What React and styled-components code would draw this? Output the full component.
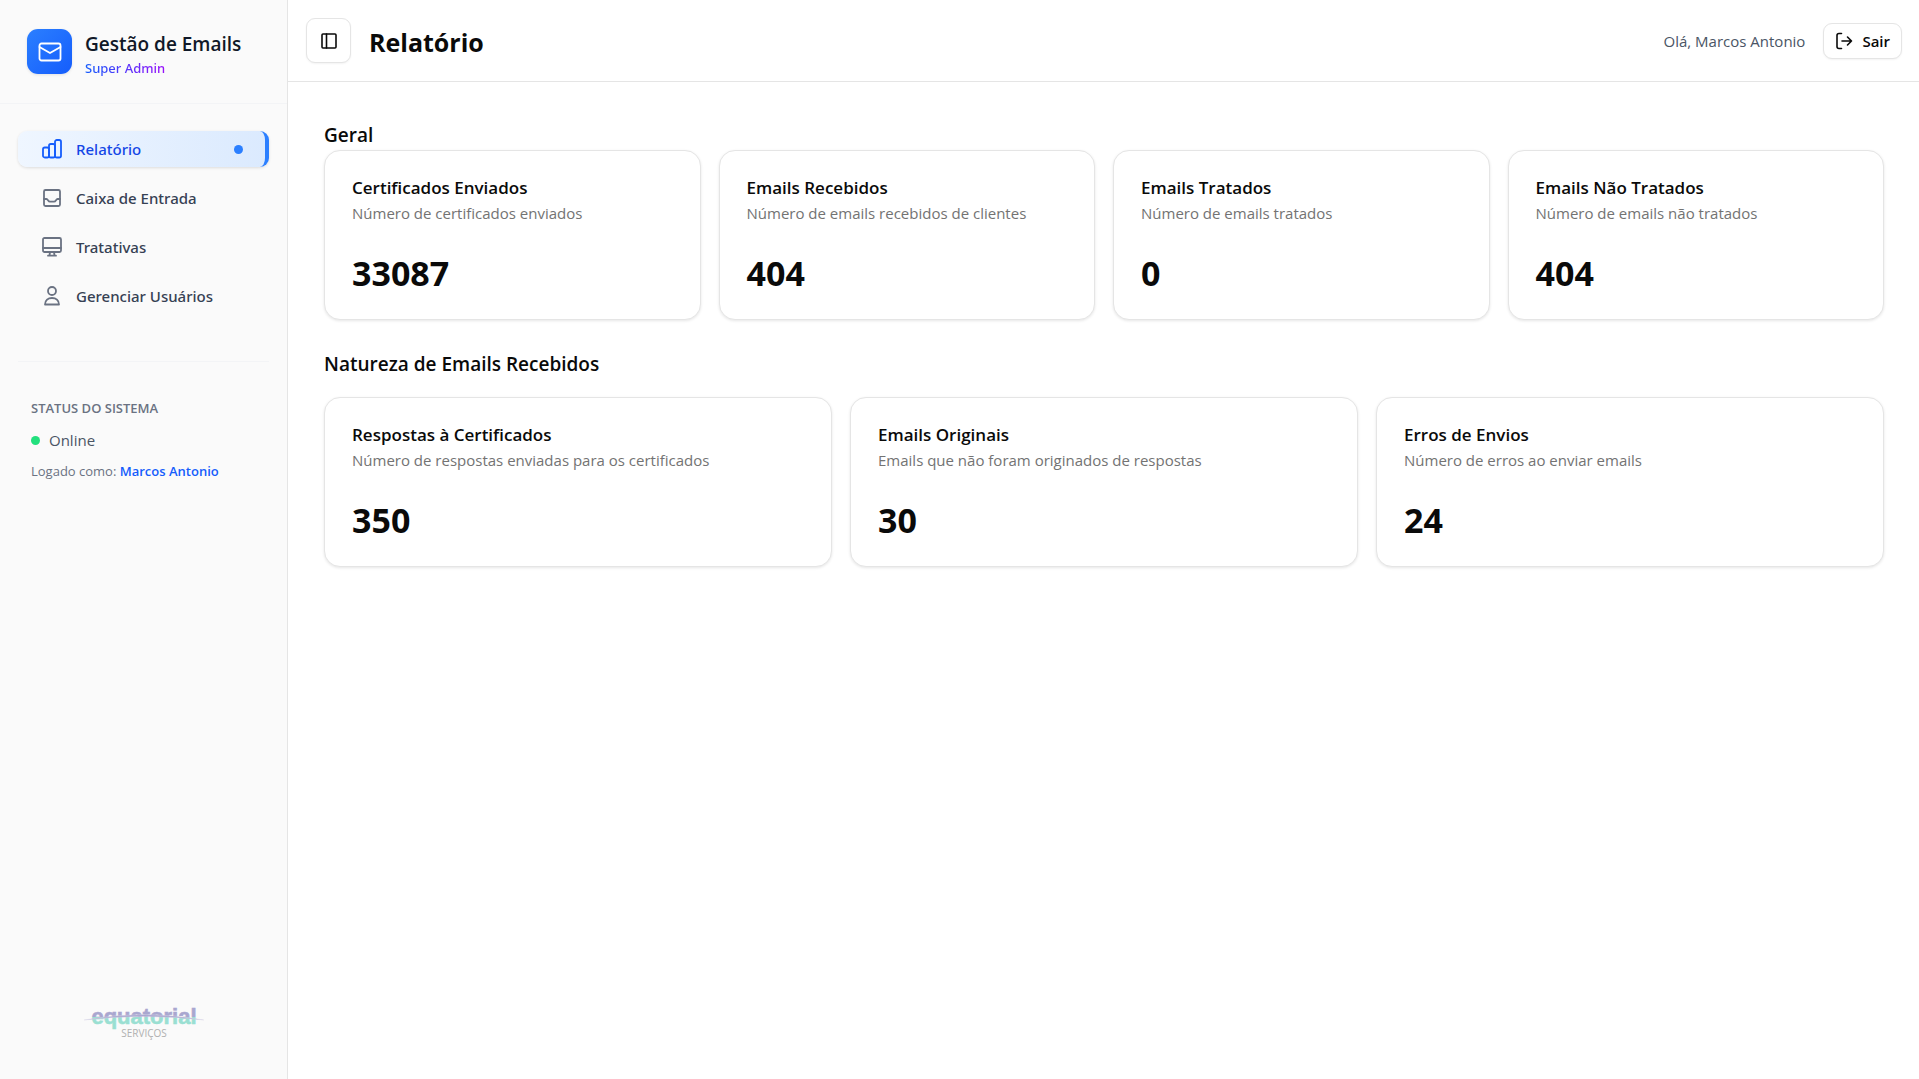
import styled, { createGlobalStyle } from "styled-components";

const menu = [
  { name: "Relatório", Icon: ChartIcon, active: true },
  { name: "Caixa de Entrada", Icon: InboxIcon },
  { name: "Tratativas", Icon: MonitorIcon },
  { name: "Gerenciar Usuários", Icon: UserIcon },
];

const general = [
  {
    title: "Certificados Enviados",
    description: "Número de certificados enviados",
    value: 33087,
  },
  {
    title: "Emails Recebidos",
    description: "Número de emails recebidos de clientes",
    value: 404,
  },
  {
    title: "Emails Tratados",
    description: "Número de emails tratados",
    value: 0,
  },
  {
    title: "Emails Não Tratados",
    description: "Número de emails não tratados",
    value: 404,
  },
];

const nature = [
  {
    title: "Respostas à Certificados",
    description: "Número de respostas enviadas para os certificados",
    value: 350,
  },
  {
    title: "Emails Originais",
    description: "Emails que não foram originados de respostas",
    value: 30,
  },
  {
    title: "Erros de Envios",
    description: "Número de erros ao enviar emails",
    value: 24,
  },
];

function App() {
  return (
    <Wrapper>
      <GlobalStyle />
      <Sidebar>
        <Brand>
          <BrandIcon>
            <MailIcon />
          </BrandIcon>
          <div>
            <BrandName>Gestão de Emails</BrandName>
            <Role>Super Admin</Role>
          </div>
        </Brand>
        <Nav>
          {menu.map(({ name, Icon, active }) => (
            <NavLink key={name} href="#" $active={active}>
              <Icon />
              <span>{name}</span>
              {active && <ActiveDot />}
            </NavLink>
          ))}
        </Nav>
        <Status>
          <StatusTitle>STATUS DO SISTEMA</StatusTitle>
          <Online>
            <OnlineDot />
            Online
          </Online>
          <Logged>
            Logado como: <strong>Marcos Antonio</strong>
          </Logged>
        </Status>
        <SidebarFooter>
          <EquatorialLogo />
        </SidebarFooter>
      </Sidebar>

      <Main>
        <Header>
          <IconButton type="button" aria-label="Alternar menu">
            <PanelIcon />
          </IconButton>
          <PageTitle>Relatório</PageTitle>
          <Greeting>Olá, Marcos Antonio</Greeting>
          <LogoutButton type="button">
            <LogoutIcon />
            Sair
          </LogoutButton>
        </Header>
        <Content>
          <section>
            <SectionTitle>Geral</SectionTitle>
            <Cards $columns={4}>
              {general.map((item) => (
                <StatCard key={item.title} {...item} />
              ))}
            </Cards>
          </section>
          <SpacedSection>
            <SectionTitle>Natureza de Emails Recebidos</SectionTitle>
            <Cards $columns={3}>
              {nature.map((item) => (
                <StatCard key={item.title} {...item} />
              ))}
            </Cards>
          </SpacedSection>
        </Content>
      </Main>
    </Wrapper>
  );
}

export default App;

function StatCard({ title, description, value }) {
  return (
    <Card>
      <CardTitle>{title}</CardTitle>
      <CardDescription>{description}</CardDescription>
      <CardValue>{value}</CardValue>
    </Card>
  );
}

function ChartIcon() {
  return (
    <Stroke viewBox="0 0 20 20" $size={20}>
      <rect x="1" y="8.5" width="6" height="10" rx="1.8" />
      <rect x="7" y="5" width="6" height="13.5" rx="1.8" />
      <rect x="13" y="1" width="6" height="17.5" rx="1.8" />
    </Stroke>
  );
}

function InboxIcon() {
  return (
    <Stroke viewBox="0 0 20 20" $size={20}>
      <rect x="2" y="2" width="16" height="16" rx="1.5" />
      <path d="M2 11h2.500C6 11 6 13.700 8 13.700h4c2 0 2-2.700 3.500-2.700H18" />
    </Stroke>
  );
}

function MonitorIcon() {
  return (
    <Stroke viewBox="0 0 20 20" $size={20}>
      <rect x="1" y="1" width="18" height="14" rx="1.5" />
      <path d="M1 11h18M8 15l-.5 3.500M12 15l.5 3.500M6 18.700h8" />
    </Stroke>
  );
}

function UserIcon() {
  return (
    <Stroke viewBox="0 0 20 20" $size={20}>
      <circle cx="10" cy="5" r="4" />
      <path d="M3 18.500C3 14.500 6 12 10 12s7 2.500 7 6.500z" />
    </Stroke>
  );
}

function MailIcon() {
  return (
    <Stroke viewBox="0 0 24 24" $size={24}>
      <rect x="1.5" y="3.5" width="21" height="17" rx="2" />
      <path d="M1.500 7L12 13l10.500-6" />
    </Stroke>
  );
}

function PanelIcon() {
  return (
    <Stroke viewBox="0 0 18 18" $size={18} $weight={1.6}>
      <rect x="2" y="2" width="14" height="14" rx="1" />
      <path d="M6.500 2v14" />
    </Stroke>
  );
}

function LogoutIcon() {
  return (
    <Stroke viewBox="0 0 18 18" $size={18} $weight={1.6}>
      <path d="M6.500 1.500H4Q2 1.500 2 3.500v11Q2 16.500 4 16.500H6.500M7 9H16.500M12.500 5l4 4-4 4" />
    </Stroke>
  );
}

function EquatorialLogo() {
  return (
    <LogoSvg viewBox="0 0 122 40" role="img" aria-label="Equatorial Serviços">
      <defs>
        <linearGradient
          id="logoFill"
          gradientUnits="userSpaceOnUse"
          x1="0"
          y1="0"
          x2="0"
          y2="30"
        >
          <stop offset="0.52" stopColor="#a9a7cf" />
          <stop offset="0.52" stopColor="#9adfd2" />
        </linearGradient>
      </defs>
      <LogoName x="61" y="23">
        equatorial
      </LogoName>
      <path
        d="M1 19Q61 8 121 19Q61 12 1 19z"
        fill="#a9a7cf"
        stroke="#dddcec"
        strokeWidth="0.4"
      />
      <LogoCaption x="61" y="36">
        SERVIÇOS
      </LogoCaption>
    </LogoSvg>
  );
}

const GlobalStyle = createGlobalStyle`
  * {
    box-sizing: border-box;
  }

  body {
    margin: 0;
    background: #ffffff;
    color: #0a0a0a;
    font-family: "Open Sans", "Noto Sans", sans-serif;
    font-size: 15px;
  }

  h1, h2, h3, p {
    margin: 0;
  }

  button {
    font: inherit;
    color: inherit;
    cursor: pointer;
  }
`;

const Wrapper = styled.div`
  display: flex;
  min-height: 100vh;
`;

const Sidebar = styled.aside`
  display: flex;
  flex-direction: column;
  flex-shrink: 0;
  width: 288px;
  background: #fafafa;
  border-right: 1px solid #e5e5e5;
`;

const Brand = styled.div`
  display: flex;
  align-items: center;
  gap: 13px;
  height: 104px;
  padding: 0 27px;
  border-bottom: 1px solid #f3f4f6;
`;

const BrandIcon = styled.div`
  display: grid;
  place-items: center;
  width: 45px;
  height: 45px;
  border-radius: 11px;
  color: #ffffff;
  background: linear-gradient(135deg, #2b7fff, #155dfc);
  box-shadow: 0 1px 3px rgba(0, 0, 0, 0.1);
`;

const BrandName = styled.h2`
  padding-top: 4px;
  font-size: 19px;
  font-weight: 600;
  line-height: 28px;
  color: #101828;
`;

const Role = styled.p`
  width: fit-content;
  font-family: "Noto Sans", "Open Sans", sans-serif;
  font-size: 13px;
  font-weight: 500;
  line-height: 20px;
  color: transparent;
  background: linear-gradient(90deg, #155dfc, #9810fa);
  background-clip: text;
`;

const Nav = styled.nav`
  display: flex;
  flex-direction: column;
  gap: 13px;
  margin: 0 18px;
  padding: 27px 0 47px;
  border-bottom: 1px solid #f3f4f6;
`;

const NavLink = styled.a`
  display: flex;
  align-items: center;
  gap: 14px;
  height: 36px;
  padding: 0 22px 0 24px;
  border-radius: 9px;
  border-right: 4px solid ${({ $active }) => ($active ? "#2b7fff" : "transparent")};
  background: ${({ $active }) =>
    $active ? "linear-gradient(90deg, #eff6ff, #dbeafe)" : "none"};
  box-shadow: ${({ $active }) =>
    $active ? "0 1px 3px rgba(0, 0, 0, 0.12)" : "none"};
  color: ${({ $active }) => ($active ? "#1447e6" : "#364153")};
  font-family: "Noto Sans", "Open Sans", sans-serif;
  font-weight: 500;
  line-height: 20px;
  text-decoration: none;

  svg {
    color: ${({ $active }) => ($active ? "#155dfc" : "#6a7282")};
  }
`;

const ActiveDot = styled.i`
  width: 9px;
  height: 9px;
  margin-left: auto;
  border-radius: 50%;
  background: #2b7fff;
`;

const Status = styled.div`
  padding: 36px 31px;
`;

const StatusTitle = styled.h3`
  font-size: 13px;
  font-weight: 600;
  line-height: 20px;
  color: #6a7282;
`;

const Online = styled.p`
  display: flex;
  align-items: center;
  gap: 9px;
  margin-top: 11px;
  line-height: 22px;
  color: #4a5565;
`;

const OnlineDot = styled.i`
  width: 9px;
  height: 9px;
  border-radius: 50%;
  background: #22e07d;
`;

const Logged = styled.p`
  margin-top: 10px;
  font-size: 13px;
  line-height: 20px;
  color: #6a7282;

  strong {
    font-weight: 600;
    color: #155dfc;
  }
`;

const SidebarFooter = styled.footer`
  display: flex;
  justify-content: center;
  margin-top: auto;
  padding-bottom: 38px;
`;

const LogoSvg = styled.svg`
  width: 122px;
  height: 40px;
`;

const LogoName = styled.text`
  font-family: "Liberation Sans", Arial, sans-serif;
  font-size: 22px;
  font-weight: 700;
  text-anchor: middle;
  fill: url(#logoFill);
  stroke: url(#logoFill);
  stroke-width: 0.6;
`;

const LogoCaption = styled.text`
  font-size: 10px;
  text-anchor: middle;
  fill: #b0b0b0;
`;

const Main = styled.main`
  flex: 1;
  min-width: 0;
`;

const Header = styled.header`
  display: flex;
  align-items: center;
  gap: 18px;
  height: 82px;
  padding: 0 17px 0 18px;
  border-bottom: 1px solid #e5e5e5;
`;

const IconButton = styled.button`
  display: grid;
  place-items: center;
  width: 45px;
  height: 45px;
  padding: 0;
  border: 1px solid #e5e5e5;
  border-radius: 9px;
  background: #ffffff;
  box-shadow: 0 1px 2px rgba(0, 0, 0, 0.05);
`;

const PageTitle = styled.h1`
  padding-top: 2px;
  font-size: 25px;
  font-weight: 700;
  line-height: 36px;
`;

const Greeting = styled.span`
  margin-left: auto;
  line-height: 22px;
  color: #4a5565;
`;

const LogoutButton = styled(IconButton)`
  display: flex;
  align-items: center;
  gap: 9px;
  width: auto;
  height: 36px;
  padding: 0 11px;
  font-weight: 600;
  line-height: 20px;
`;

const Content = styled.div`
  padding: 38px 35px 36px 36px;
`;

const SectionTitle = styled.h2`
  font-size: 19px;
  font-weight: 600;
  line-height: 30px;
`;

const Cards = styled.div`
  display: grid;
  grid-template-columns: repeat(${({ $columns }) => $columns}, 1fr);
  gap: 18px;
`;

const SpacedSection = styled.section`
  margin-top: 29px;

  ${Cards} {
    margin-top: 18px;
  }
`;

const Card = styled.article`
  padding: 27px 27px 25px;
  border: 1px solid #e5e5e5;
  border-radius: 16px;
  background: #ffffff;
  box-shadow: 0 1px 3px rgba(0, 0, 0, 0.1);
`;

const CardTitle = styled.h3`
  font-size: 17px;
  font-weight: 600;
  line-height: 20px;
`;

const CardDescription = styled.p`
  margin-top: 4px;
  line-height: 22px;
  color: #737373;
`;

const CardValue = styled.p`
  margin-top: 28px;
  font-size: 34px;
  font-weight: 700;
  line-height: 42px;
`;

const Stroke = styled.svg`
  flex-shrink: 0;
  width: ${({ $size }) => $size}px;
  height: ${({ $size }) => $size}px;
  fill: none;
  stroke: currentColor;
  stroke-width: ${({ $weight = 1.8 }) => $weight};
  stroke-linecap: round;
  stroke-linejoin: round;
`;
